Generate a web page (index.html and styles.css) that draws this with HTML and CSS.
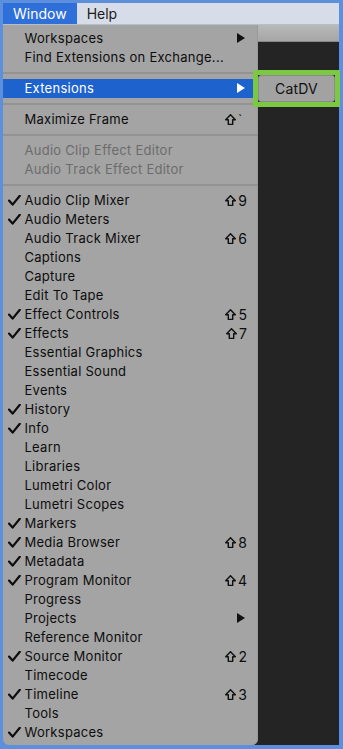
FILE: index.html
```html
<!DOCTYPE html>
<html>
<head>
<meta charset="utf-8">
<link rel="stylesheet" href="styles.css">
</head>
<body>
<div class="frame">
  <div class="menubar">
    <div class="mb-item active">Window</div>
    <div class="mb-item">Help</div>
  </div>
  <div class="workarea">
    <div class="menu">
      <div class="row"><span class="label">Workspaces</span><span class="tri"></span></div>
      <div class="row"><span class="label">Find Extensions on Exchange...</span></div>
      <div class="sep"></div>
      <div class="row hl"><span class="label">Extensions</span><span class="tri"></span></div>
      <div class="sep"></div>
      <div class="row"><span class="label">Maximize Frame</span><span class="sc"><svg class="shift" viewBox="0 0 10 10"><path d="M5 0.6 L9.4 5.2 H7 V9.4 H3 V5.2 H0.6 Z"/></svg><span class="tick">`</span></span></div>
      <div class="sep"></div>
      <div class="row dis"><span class="label">Audio Clip Effect Editor</span></div>
      <div class="row dis"><span class="label">Audio Track Effect Editor</span></div>
      <div class="sep"></div>
      <div class="row"><svg class="check" viewBox="0 0 13 11"><path d="M1 5.6 L4.6 9.6 L11.8 0.8"/></svg><span class="label">Audio Clip Mixer</span><span class="sc"><svg class="shift" viewBox="0 0 10 10"><path d="M5 0.6 L9.4 5.2 H7 V9.4 H3 V5.2 H0.6 Z"/></svg>9</span></div>
      <div class="row"><svg class="check" viewBox="0 0 13 11"><path d="M1 5.6 L4.6 9.6 L11.8 0.8"/></svg><span class="label">Audio Meters</span></div>
      <div class="row"><span class="label">Audio Track Mixer</span><span class="sc"><svg class="shift" viewBox="0 0 10 10"><path d="M5 0.6 L9.4 5.2 H7 V9.4 H3 V5.2 H0.6 Z"/></svg>6</span></div>
      <div class="row"><span class="label">Captions</span></div>
      <div class="row"><span class="label">Capture</span></div>
      <div class="row"><span class="label">Edit To Tape</span></div>
      <div class="row"><svg class="check" viewBox="0 0 13 11"><path d="M1 5.6 L4.6 9.6 L11.8 0.8"/></svg><span class="label">Effect Controls</span><span class="sc"><svg class="shift" viewBox="0 0 10 10"><path d="M5 0.6 L9.4 5.2 H7 V9.4 H3 V5.2 H0.6 Z"/></svg>5</span></div>
      <div class="row"><svg class="check" viewBox="0 0 13 11"><path d="M1 5.6 L4.6 9.6 L11.8 0.8"/></svg><span class="label">Effects</span><span class="sc"><svg class="shift" viewBox="0 0 10 10"><path d="M5 0.6 L9.4 5.2 H7 V9.4 H3 V5.2 H0.6 Z"/></svg>7</span></div>
      <div class="row"><span class="label">Essential Graphics</span></div>
      <div class="row"><span class="label">Essential Sound</span></div>
      <div class="row"><span class="label">Events</span></div>
      <div class="row"><svg class="check" viewBox="0 0 13 11"><path d="M1 5.6 L4.6 9.6 L11.8 0.8"/></svg><span class="label">History</span></div>
      <div class="row"><svg class="check" viewBox="0 0 13 11"><path d="M1 5.6 L4.6 9.6 L11.8 0.8"/></svg><span class="label">Info</span></div>
      <div class="row"><span class="label">Learn</span></div>
      <div class="row"><span class="label">Libraries</span></div>
      <div class="row"><span class="label">Lumetri Color</span></div>
      <div class="row"><span class="label">Lumetri Scopes</span></div>
      <div class="row"><svg class="check" viewBox="0 0 13 11"><path d="M1 5.6 L4.6 9.6 L11.8 0.8"/></svg><span class="label">Markers</span></div>
      <div class="row"><svg class="check" viewBox="0 0 13 11"><path d="M1 5.6 L4.6 9.6 L11.8 0.8"/></svg><span class="label">Media Browser</span><span class="sc"><svg class="shift" viewBox="0 0 10 10"><path d="M5 0.6 L9.4 5.2 H7 V9.4 H3 V5.2 H0.6 Z"/></svg>8</span></div>
      <div class="row"><svg class="check" viewBox="0 0 13 11"><path d="M1 5.6 L4.6 9.6 L11.8 0.8"/></svg><span class="label">Metadata</span></div>
      <div class="row"><svg class="check" viewBox="0 0 13 11"><path d="M1 5.6 L4.6 9.6 L11.8 0.8"/></svg><span class="label">Program Monitor</span><span class="sc"><svg class="shift" viewBox="0 0 10 10"><path d="M5 0.6 L9.4 5.2 H7 V9.4 H3 V5.2 H0.6 Z"/></svg>4</span></div>
      <div class="row"><span class="label">Progress</span></div>
      <div class="row"><span class="label">Projects</span><span class="tri"></span></div>
      <div class="row"><span class="label">Reference Monitor</span></div>
      <div class="row"><svg class="check" viewBox="0 0 13 11"><path d="M1 5.6 L4.6 9.6 L11.8 0.8"/></svg><span class="label">Source Monitor</span><span class="sc"><svg class="shift" viewBox="0 0 10 10"><path d="M5 0.6 L9.4 5.2 H7 V9.4 H3 V5.2 H0.6 Z"/></svg>2</span></div>
      <div class="row"><span class="label">Timecode</span></div>
      <div class="row"><svg class="check" viewBox="0 0 13 11"><path d="M1 5.6 L4.6 9.6 L11.8 0.8"/></svg><span class="label">Timeline</span><span class="sc"><svg class="shift" viewBox="0 0 10 10"><path d="M5 0.6 L9.4 5.2 H7 V9.4 H3 V5.2 H0.6 Z"/></svg>3</span></div>
      <div class="row"><span class="label">Tools</span></div>
      <div class="row"><svg class="check" viewBox="0 0 13 11"><path d="M1 5.6 L4.6 9.6 L11.8 0.8"/></svg><span class="label">Workspaces</span></div>
    </div>
    <div class="side">
      <div class="side-bar"></div>
      <div class="side-dark"></div>
    </div>
  </div>
  <div class="submenu">
    <div class="sub-btn">CatDV</div>
  </div>
</div>
</body>
</html>
```

FILE: styles.css
```css
* { box-sizing: border-box; }
html, body { margin: 0; padding: 0; }
body {
  width: 343px;
  height: 749px;
  overflow: hidden;
  font-family: Inter, "Liberation Sans", sans-serif;
  font-size: 13px;
  color: #0d0d0d;
}
.frame {
  position: relative;
  width: 343px;
  height: 749px;
  background: #5d90dc;
  padding: 3px 4px 4px 3px;
  display: flex;
  flex-direction: column;
}
.menubar {
  height: 22px;
  flex: none;
  background: #d6dde8;
  border-bottom: 1px solid #b9bec6;
  display: flex;
  align-items: stretch;
  font-size: 14px;
}
.mb-item {
  padding: 0 10px;
  line-height: 21px;
  color: #1a1a1a;
}
.mb-item.active {
  background: #2f6fd9;
  color: #fff;
}
.workarea {
  flex: 1;
  display: flex;
  min-height: 0;
  background: linear-gradient(to right, transparent 20px, #242424 20px);
}
.menu {
  width: 255px;
  flex: none;
  background: #a4a4a4;
  border-radius: 0 0 6px 6px;
  padding: 3.5px 0 3px;
  box-shadow: inset -1px 0 0 #9a9a9a;
}
.row {
  position: relative;
  height: 19px;
  line-height: 19px;
  display: flex;
  align-items: center;
  padding: 0 11px 0 21.5px;
  white-space: nowrap;
  letter-spacing: 0.27px;
}
.row .label { flex: 1; }
.row.dis { color: #6c6c6c; }
.row.hl { background: #1e62cd; color: #fff; }
.check {
  position: absolute;
  left: 5px;
  top: 4px;
  width: 13px;
  height: 11px;
  fill: none;
  stroke: #0d0d0d;
  stroke-width: 2.2;
  stroke-linecap: round;
  stroke-linejoin: round;
}
.tri {
  width: 0;
  height: 0;
  border-top: 5px solid transparent;
  border-bottom: 5px solid transparent;
  border-left: 8px solid #111;
  margin-right: 2px;
}
.row.hl .tri { border-left-color: #fff; }
.sc {
  display: flex;
  align-items: center;
  font-size: 14px;
  letter-spacing: 0;
}
.shift {
  width: 11px;
  height: 11px;
  margin-right: 2px;
  fill: none;
  stroke: #111;
  stroke-width: 1.3;
  stroke-linejoin: round;
}
.tick {
  width: 9px;
  align-self: flex-start;
  line-height: 14px;
  font-size: 13px;
}
.sep {
  height: 12px;
  padding: 5px 0;
}
.sep::before {
  content: "";
  display: block;
  height: 2px;
  background: #939393;
}
.side {
  flex: 1;
  display: flex;
  flex-direction: column;
}
.side-bar {
  height: 17px;
  background: linear-gradient(#b9b9b9, #a6a6a6);
  border-bottom: 1px solid #8a8a8a;
}
.side-dark {
  flex: 1;
  background: #242424;
}
.submenu {
  position: absolute;
  left: 253px;
  top: 70px;
  width: 87px;
  height: 37px;
  border: 5px solid #7bc843;
  background: #242424;
  padding: 0;
}
.sub-btn {
  height: 100%;
  background: #a2a2a2;
  border: 1px solid #8c8c8c;
  border-radius: 3px;
  text-align: center;
  line-height: 25px;
  font-size: 14px;
  letter-spacing: 0.2px;
  color: #111;
}
```
